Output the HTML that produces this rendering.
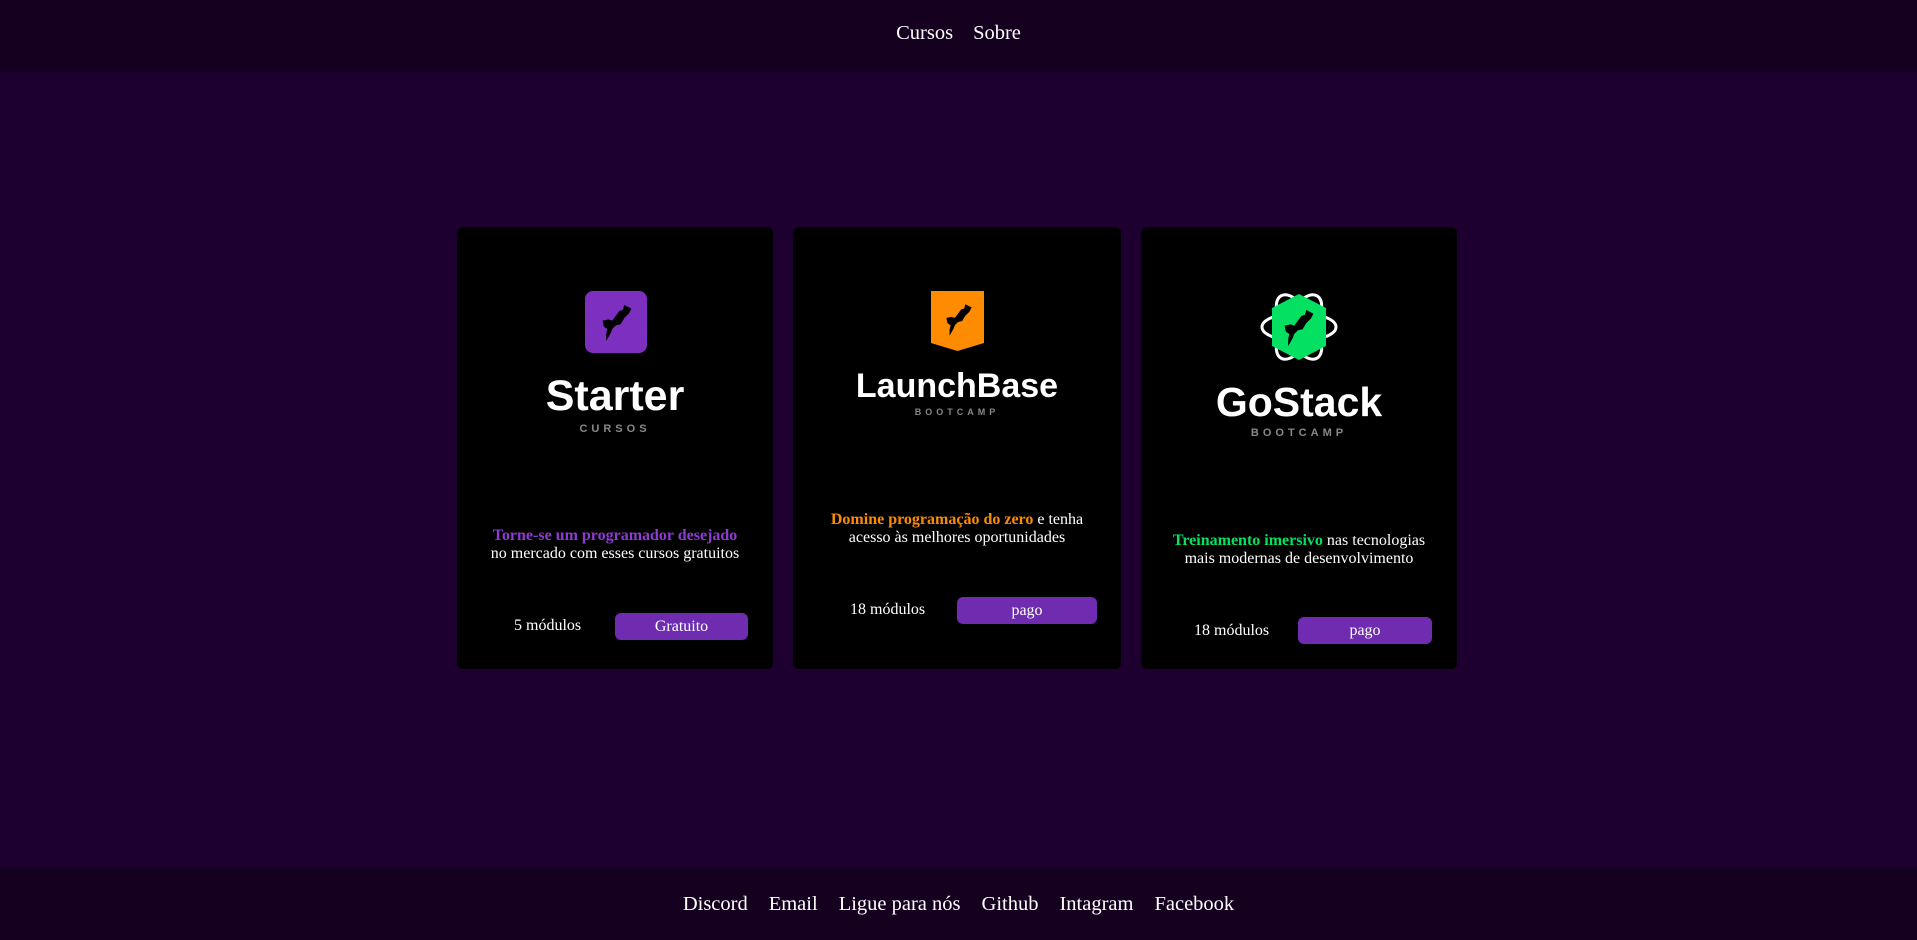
<!DOCTYPE html>
<html><head><meta charset="utf-8"><style>
*{margin:0;padding:0;box-sizing:border-box}
body{width:1917px;height:940px;background:#1e0030;position:relative;overflow:hidden;font-family:"Liberation Serif",serif;color:#fff}
.hdr{position:absolute;left:0;top:0;width:1917px;height:72px;background:#150020;text-align:center;font-size:20.5px;line-height:66px}
.hdr span{margin:0 10px}
.ftr{position:absolute;left:0;top:868px;width:1917px;height:72px;background:#150020;text-align:center;font-size:20.5px;line-height:72px}
.ftr span{margin:0 10.5px}
.card{position:absolute;top:227px;height:442px;background:#000;border-radius:6px}
.abs{position:absolute}
.ttl{position:absolute;left:0;width:100%;text-align:center;font-family:"Liberation Sans",sans-serif;font-weight:bold}
.sub{position:absolute;left:0;width:100%;text-align:center;font-family:"Liberation Sans",sans-serif;font-weight:bold;font-size:11px;letter-spacing:4px;color:#888}
.desc{position:absolute;left:0;width:100%;text-align:center;font-size:16px;line-height:18px}
.mod{position:absolute;font-size:16px}
.btn{position:absolute;background:#6f2cb0;border-radius:6px;text-align:center;font-size:16px;line-height:27px;height:27px}
</style></head><body>
<div class="hdr"><span>Cursos</span><span>Sobre</span></div>

<svg width="0" height="0" style="position:absolute"><defs>
<path id="rk" d="M26 5 L32 8 L30 12 L26 16 L23 21 L19 22 L16 25 L15 28 L11 35 L11 29 L12 25 L9 23 L8 18 L13 17 L16 18 L19 14 L22 10 L25 9 Z"/>
</defs></svg>

<div class="card" style="left:457px;width:316px">
 <svg class="abs" style="left:128px;top:64px" width="62" height="62" viewBox="0 0 62 62"><rect width="62" height="62" rx="8" fill="#7d2fbf"/><use href="#rk" transform="translate(8,8) scale(1.2)" fill="#000"/></svg>
 <div class="ttl" style="top:145px;font-size:43px">Starter</div>
 <div class="sub" style="top:196px">CURSOS</div>
 <div class="desc" style="top:300px"><span style="color:#8e3ad3;font-weight:bold">Torne-se um programador desejado</span><br>no mercado com esses cursos gratuitos</div>
 <div class="mod" style="left:57px;top:390px">5 módulos</div>
 <div class="btn" style="left:158px;top:386px;width:133px">Gratuito</div>
</div>

<div class="card" style="left:793px;width:328px">
 <svg class="abs" style="left:138px;top:64px" width="53" height="61" viewBox="0 0 53 61"><path d="M0 0 H53 V52 L26.5 60 L0 52 Z" fill="#ff8c00"/><use href="#rk" transform="translate(7,8) scale(1.05)" fill="#000"/></svg>
 <div class="ttl" style="top:140px;font-size:34px">LaunchBase</div>
 <div class="sub" style="top:180px;font-size:9px">BOOTCAMP</div>
 <div class="desc" style="top:284px"><span style="color:#ff8c00;font-weight:bold">Domine programação do zero</span> e tenha<br>acesso às melhores oportunidades</div>
 <div class="mod" style="left:57px;top:374px">18 módulos</div>
 <div class="btn" style="left:164px;top:370px;width:140px">pago</div>
</div>

<div class="card" style="left:1141px;width:316px">
 <svg class="abs" style="left:119px;top:64px" width="78" height="72" viewBox="0 0 78 72">
  <ellipse cx="39" cy="36" rx="36" ry="16" fill="none" stroke="#fff" stroke-width="3" transform="rotate(60 39 36)"/>
  <ellipse cx="39" cy="36" rx="36" ry="16" fill="none" stroke="#fff" stroke-width="3" transform="rotate(-60 39 36)"/>
  <ellipse cx="39" cy="36" rx="37" ry="14" fill="none" stroke="#fff" stroke-width="3"/>
  <path d="M39 3 L66 17 V55 L39 69 L12 55 V17 Z" fill="#04e061"/>
  <use href="#rk" transform="translate(15,13) scale(1.2)" fill="#000"/>
 </svg>
 <div class="ttl" style="top:152px;font-size:41px">GoStack</div>
 <div class="sub" style="top:200px">BOOTCAMP</div>
 <div class="desc" style="top:305px"><span style="color:#04e061;font-weight:bold">Treinamento imersivo</span> nas tecnologias<br>mais modernas de desenvolvimento</div>
 <div class="mod" style="left:53px;top:395px">18 módulos</div>
 <div class="btn" style="left:157px;top:390px;width:134px">pago</div>
</div>

<div class="ftr"><span>Discord</span><span>Email</span><span>Ligue para nós</span><span>Github</span><span>Intagram</span><span>Facebook</span></div>
</body></html>
